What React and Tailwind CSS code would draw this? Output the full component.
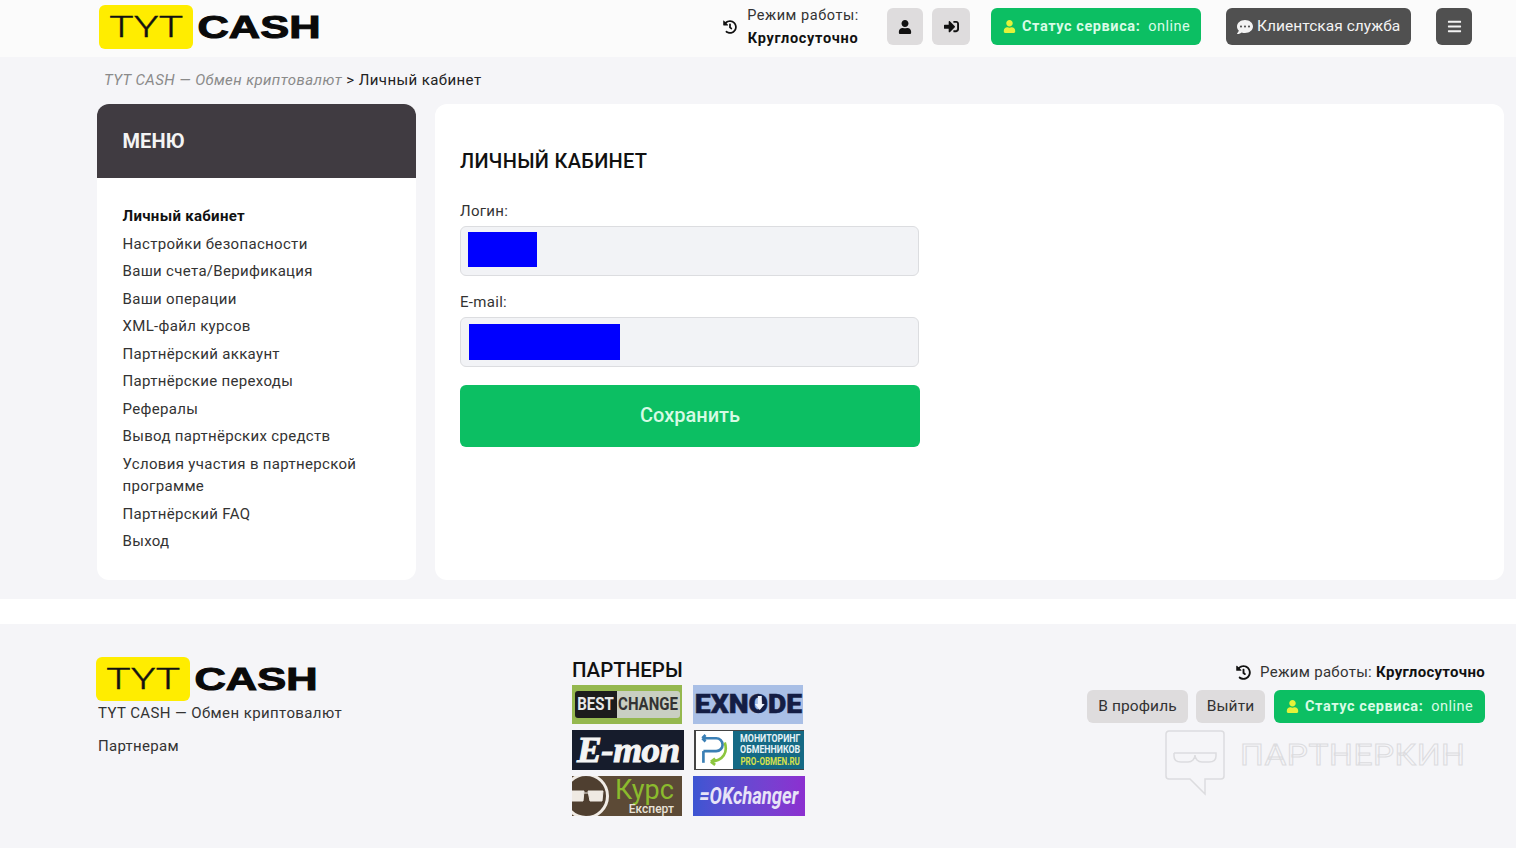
import React from "react";
import { FaHistory, FaUser, FaSignInAlt, FaCommentDots, FaBars } from "react-icons/fa";

const menuItems = [
  "Настройки безопасности",
  "Ваши счета/Верификация",
  "Ваши операции",
  "XML-файл курсов",
  "Партнёрский аккаунт",
  "Партнёрские переходы",
  "Рефералы",
  "Вывод партнёрских средств",
  "Условия участия в партнерской программе",
  "Партнёрский FAQ",
  "Выход",
];

const Logo = () => (
  <div className="flex items-center">
    <div className="w-[94px] h-[44px] rounded-[6px] bg-[#ffed00] flex items-center justify-center">
      <span className="text-[30px] leading-none font-light text-[#111] scale-x-[1.36] font-['Roboto',sans-serif] [-webkit-text-stroke:0.4px_#111]">TYT</span>
    </div>
    <span className="ml-[5px] w-[122px] text-center text-[31px] leading-none font-black text-[#0a0a0a] scale-x-[1.4] font-['Liberation_Sans',sans-serif] [-webkit-text-stroke:1px_#0a0a0a]">CASH</span>
  </div>
);

const StatusBadge = ({ className }) => (
  <div className={`h-[37px] rounded-[6px] bg-[#0cbf63] flex items-center text-[14.5px] text-[#d9fbe6] ${className}`}>
    <FaUser className="text-[#e4f23a] text-[13px] mr-[6px]" />
    <span className="font-bold tracking-[0.58px] mr-[8px]">Статус сервиса:</span>
    <span className="tracking-[0.45px]">online</span>
  </div>
);

const PartnerTile = ({ className, children }) => (
  <div className={`overflow-hidden flex items-center justify-center ${className}`}>{children}</div>
);

const Partners = () => (
  <div className="grid grid-cols-[110px_112px] gap-x-[11px] gap-y-[6px] mt-[2px]">
    <PartnerTile className="w-[110px] h-[39px] bg-[#95b84f]">
      <div className="w-[105px] h-[27px] rounded-[3px] flex overflow-hidden font-['Roboto',sans-serif] font-bold text-[15px] leading-[27px]">
        <div className="w-[42px] bg-[#1c1c1c] flex justify-center">
          <span className="text-[#e8e8e8] scale-y-[1.25]">BEST</span>
        </div>
        <div className="flex-1 bg-[#c9cfc2] flex justify-center">
          <span className="text-[#333] scale-y-[1.25]">CHANGE</span>
        </div>
      </div>
    </PartnerTile>
    <PartnerTile className="w-[110px] h-[39px] bg-[#a9bfe6]">
      <span className="font-['Roboto',sans-serif] font-black text-[25px] leading-none text-[#141d44] scale-x-[1.13] [-webkit-text-stroke:0.5px_#141d44]">
        EXN
        <span className="relative">
          O
          <svg viewBox="0 0 10 16" className="absolute left-[5px] top-[6px] w-[9px] h-[14px]" fill="#eef3fb">
            <path d="M3 0h4v9h3l-5 7-5-7h3z" />
          </svg>
        </span>
        DE
      </span>
    </PartnerTile>
    <PartnerTile className="w-[112px] h-[40px] bg-[#161c2c]">
      <span className="font-['Liberation_Serif',serif] italic font-bold text-[35px] leading-none tracking-[-0.5px] text-[#f4f4f4] scale-x-[1.06] [-webkit-text-stroke:1px_#f4f4f4]">E-mon</span>
    </PartnerTile>
    <PartnerTile className="w-[110px] h-[40px] ml-[1px] bg-[#156a85] border-l-[2px] border-y border-[#444]">
      <div className="w-[41px] h-full bg-white flex items-center justify-center shrink-0">
        <svg viewBox="0 0 30 30" className="w-[32px] h-[32px]" fill="none" strokeWidth="2.5">
          <path d="M5 4h13a6 6 0 0 1 0 12H6M5 4l3-3M5 4l3 3" stroke="#3a7fb5" />
          <path d="M6 16v11" stroke="#3a7fb5" />
          <path d="M26 8c3 9-1 17-13 18M13 26l4-3M13 26l4 3" stroke="#8cc63f" />
        </svg>
      </div>
      <div className="flex-1 flex flex-col items-center font-['Roboto',sans-serif] font-bold text-[10px] leading-[11.5px] whitespace-nowrap">
        <div className="text-[#e6f2f6] scale-x-[0.88]">МОНИТОРИНГ</div>
        <div className="text-[#e6f2f6] scale-x-[0.88]">ОБМЕННИКОВ</div>
        <div className="text-[#d7e04a] scale-x-[0.8]">PRO-OBMEN.RU</div>
      </div>
    </PartnerTile>
    <PartnerTile className="w-[110px] h-[40px] bg-[#5c4a36] !justify-start">
      <div className="w-[46px] h-[46px] -ml-[9px] rounded-full bg-[#4f3f30] border-[3px] border-[#f1ece6] flex items-center justify-center shrink-0">
        <svg viewBox="0 0 36 16" className="w-[36px] h-[16px]" fill="#efeae3" stroke="#efeae3" strokeWidth="1">
          <path d="M1 3h15l-1 10H4zM20 3h15l-1 10H22z" />
          <path d="M16 5h4" />
        </svg>
      </div>
      <div className="flex flex-col items-end ml-[6px] font-['Roboto',sans-serif]">
        <span className="text-[27px] leading-[26px] text-[#8bbb2d]">Курс</span>
        <span className="text-[12px] leading-[13px] font-medium text-[#e8e2d8]">Експерт</span>
      </div>
    </PartnerTile>
    <PartnerTile className="w-[112px] h-[40px] bg-gradient-to-r from-[#3c55d2] to-[#8c2fd0]">
      <span className="font-['Roboto',sans-serif] italic font-bold text-[23px] leading-none text-[#e7e3f7] scale-x-[0.8] whitespace-nowrap">=OKchanger</span>
    </PartnerTile>
  </div>
);

export default function App() {
  return (
    <div className="min-h-[848px] bg-white font-['Roboto',sans-serif] text-[#1a1a1a] overflow-hidden">
      {/* Header */}
      <header className="h-[57px] bg-[#fbfbfb] flex items-center pl-[99px] pr-[44px]">
        <div className="mt-[-3px]"><Logo /></div>
        <div className="ml-auto flex items-center h-[37px] mt-[-4px]">
          <FaHistory className="text-[14px] mr-[8px] -ml-[1px] text-[#111]" />
          <div className="text-center w-[116px] text-[14.5px] leading-[23px] tracking-[0.55px]">
            <div className="text-[#333]">Режим работы:</div>
            <div className="font-bold text-[#111] tracking-[0.7px]">Круглосуточно</div>
          </div>
          <div className="w-[36px] h-[37px] ml-[26px] rounded-[6px] bg-[#dedcdd] flex items-center justify-center">
            <FaUser className="text-[14px] text-[#111]" />
          </div>
          <div className="w-[38px] h-[37px] ml-[9px] rounded-[6px] bg-[#dedcdd] flex items-center justify-center">
            <FaSignInAlt className="text-[15px] text-[#111]" />
          </div>
          <StatusBadge className="w-[210px] ml-[21px] pl-[12px]" />
          <div className="w-[185px] h-[37px] ml-[25px] rounded-[6px] bg-[#505050] flex items-center pl-[11px] text-[15.5px] tracking-[0.05px] text-[#f3f3f3]">
            <FaCommentDots className="text-[16px] mr-[4px]" />
            Клиентская служба
          </div>
          <div className="w-[36px] h-[37px] ml-[25px] rounded-[6px] bg-[#505050] flex items-center justify-center">
            <FaBars className="text-[15px] text-[#f3f3f3]" />
          </div>
        </div>
      </header>

      {/* Main */}
      <main className="h-[542px] bg-[#f5f5f8] pl-[97px] pr-[12px]">
        <div className="h-[47px] pt-[12px] pl-[7px] text-[15px] leading-[22px] tracking-[0.42px]">
          <span className="italic text-[#8a8a8a]">TYT CASH — Обмен криптовалют</span>
          <span className="text-[#222]"> &gt; Личный кабинет</span>
        </div>
        <div className="flex gap-[19px] h-[476px]">
          <aside className="w-[319px] rounded-[12px] bg-white overflow-hidden">
            <div className="h-[74px] bg-[#403b41] flex items-center pl-[25.5px] text-[20px] tracking-[0.1px] font-bold text-[#f4f4f4]">МЕНЮ</div>
            <ul className="pt-[27px] pl-[25.5px] pr-[40px] text-[15px] leading-[22.5px] tracking-[0.32px] text-[#333] flex flex-col gap-[5px]">
              <li className="font-bold text-[#111]">Личный кабинет</li>
              {menuItems.map((item) => (
                <li key={item}>{item}</li>
              ))}
            </ul>
          </aside>
          <section className="flex-1 rounded-[12px] bg-white pt-[44px] pl-[25px]">
            <h1 className="text-[20px] leading-[26px] tracking-[0.3px] font-medium text-[#111]">ЛИЧНЫЙ КАБИНЕТ</h1>
            <form className="w-[460px] mt-[26px]">
              <label className="block text-[15px] leading-[22px] tracking-[0.3px] text-[#333]">Логин:</label>
              <div className="w-[459px] h-[50px] mt-[4px] rounded-[6px] border border-[#dcdde0] bg-[#f2f3f6] flex items-center pl-[7px]">
                <div className="w-[69px] h-[35px] mb-[3px] bg-[#0000ff]" />
              </div>
              <label className="block mt-[15px] text-[15px] leading-[22px] tracking-[0.3px] text-[#333]">E-mail:</label>
              <div className="w-[459px] h-[50px] mt-[4px] rounded-[6px] border border-[#dcdde0] bg-[#f2f3f6] flex items-center pl-[8px]">
                <div className="w-[151px] h-[36px] bg-[#0000ff]" />
              </div>
              <button type="button" className="w-[460px] h-[62px] mt-[18px] pb-[2px] rounded-[6px] bg-[#0cbf63] text-[20px] font-medium text-[#d6fae4]">Сохранить</button>
            </form>
          </section>
        </div>
      </main>

      {/* Footer */}
      <footer className="mt-[25px] h-[224px] bg-[#f5f5f8] flex pl-[97px] pr-[31px] pt-[33px]">
        <div className="w-[475px]">
          <div className="-ml-[1px]"><Logo /></div>
          <div className="text-[15px] leading-[22px] tracking-[0.4px] text-[#333] pl-px mt-px">TYT CASH — Обмен криптовалют</div>
          <div className="text-[15px] leading-[22px] tracking-[0.3px] text-[#333] pl-px mt-[11px]">Партнерам</div>
        </div>
        <div className="w-[240px]">
          <div className="text-[20.5px] leading-[26px] font-medium text-[#111]">ПАРТНЕРЫ</div>
          <Partners />
        </div>
        <div className="ml-auto flex flex-col items-end">
          <div className="flex items-center h-[30px] text-[15px] tracking-[0.3px] text-[#333]">
            <FaHistory className="text-[15px] text-[#111] mr-[9px]" />
            <span>Режим работы: <b className="text-[#111]">Круглосуточно</b></span>
          </div>
          <div className="flex items-center mt-[3px]">
            <div className="w-[101px] h-[33px] rounded-[6px] bg-[#dedcdd] flex items-center justify-center text-[15.5px] tracking-[0.1px] text-[#333]">В профиль</div>
            <div className="w-[69px] h-[33px] ml-[8px] rounded-[6px] bg-[#dedcdd] flex items-center justify-center text-[15.5px] tracking-[0.1px] text-[#333]">Выйти</div>
            <StatusBadge className="w-[211px] !h-[33px] ml-[9px] pl-[12px]" />
          </div>
          <div className="flex items-center self-start ml-[78px] mt-[7px]">
            <svg viewBox="0 0 60 66" className="w-[60px] h-[66px]" fill="none" stroke="#dcdcdf" strokeWidth="1.5">
              <path d="M4 1h52a3 3 0 0 1 3 3v42a3 3 0 0 1-3 3H40v15L25 49H4a3 3 0 0 1-3-3V4a3 3 0 0 1 3-3z" />
              <path d="M9 23h42v3c0 4-3 6-7 6h-7c-4 0-7-3-7-7M9 23v3c0 4 3 6 7 6h7c4 0 7-3 7-7" />
            </svg>
            <span className="ml-[15px] -mt-[16px] origin-left scale-x-[1.115] text-[30px] leading-none font-normal tracking-[0.5px] text-[#f5f5f8] [-webkit-text-stroke:1px_#dcdcdf]">ПАРТНЕРКИН</span>
          </div>
        </div>
      </footer>
    </div>
  );
}
